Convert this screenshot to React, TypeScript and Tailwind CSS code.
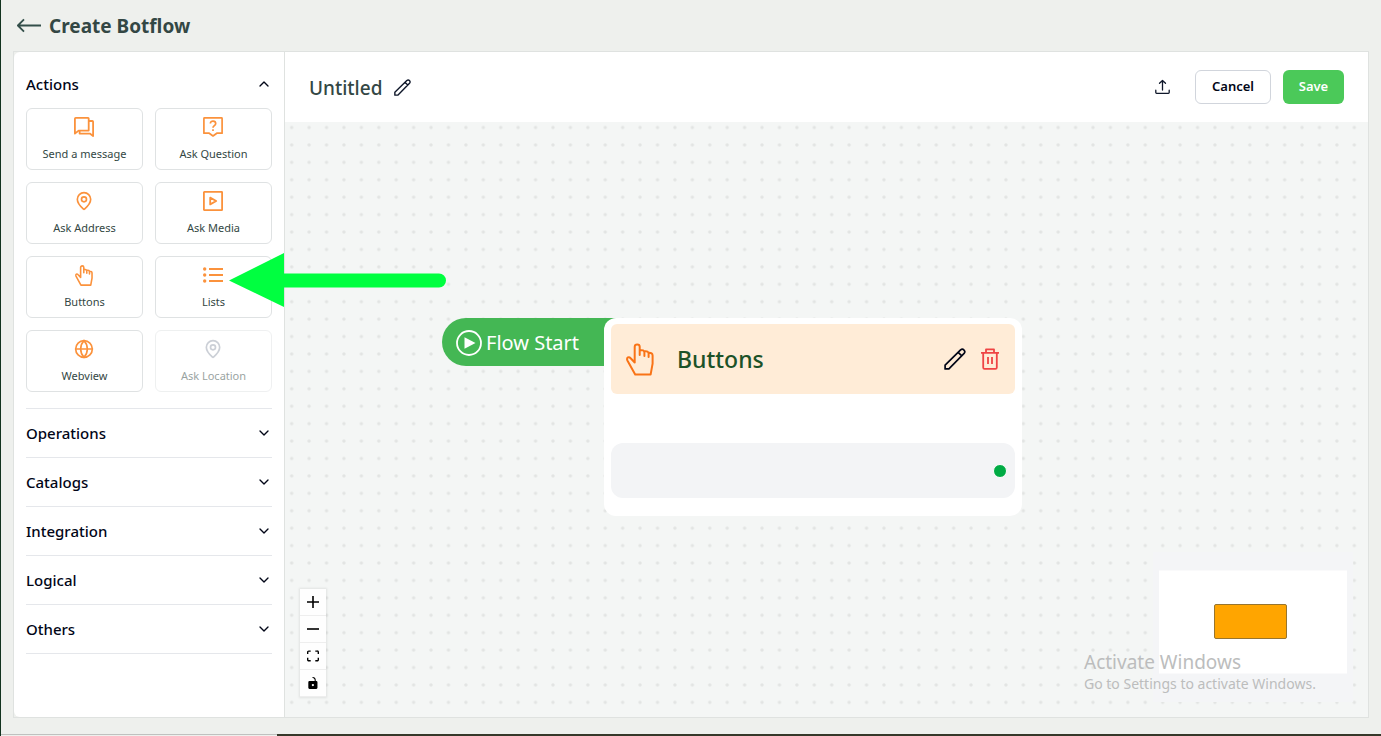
import type { ReactNode } from 'react';
import { ChevronDown, ChevronUp, Globe, MapPin } from 'lucide-react';

function MessageIcon() {
  return (
    <svg width="20" height="20" viewBox="0 0 20 20" fill="none" stroke="currentColor" strokeWidth="1.8" strokeLinejoin="round">
      <path d="M1.8.9h12.3q.6 0 .6.6v12.100H4.600L.9 16.600V1.800q0-.9.9-.9Z" />
      <path d="M14.700 4h3.700q.7 0 .7.700v14.300l-3.300-2.400H5.600v-3" />
    </svg>
  );
}

function QuestionIcon() {
  return (
    <svg width="20" height="20" viewBox="0 0 20 20" fill="none" stroke="currentColor" strokeWidth="1.7" strokeLinejoin="round">
      <path d="M1.500.9h17q.6 0 .6.6v14.700h-5.300L10 19l-3.800-2.800H.9V1.500q0-.6.6-.6Z" />
      <path d="M7.400 6.600c0-3.400 5.300-3.200 5.300 0 0 2.200-2.700 1.900-2.700 4.200" />
      <path d="M10 12.200v1.800" />
    </svg>
  );
}

function MediaIcon() {
  return (
    <svg width="20" height="20" viewBox="0 0 20 20" fill="none" stroke="currentColor" strokeWidth="1.8" strokeLinejoin="round">
      <rect x=".9" y=".9" width="18.200" height="18.200" rx=".4" />
      <path d="M7.200 6.600v6.800l6-3.400Z" />
    </svg>
  );
}

function HandIcon({ width, height, strokeWidth }: { width: number; height: number; strokeWidth: number }) {
  return (
    <svg width={width} height={height} viewBox="0 0 28 33" fill="none" stroke="currentColor" strokeWidth={strokeWidth} strokeLinejoin="round" strokeLinecap="round">
      <path d="M8.700 19.500V3.800C8.700.6 13.700.6 13.700 3.800V12M13.700 7.400q4.500-1 4.700 2V13M18.400 8.400q4.200-.6 4.200 2.200V14M22.600 9.800q4-.2 4 2.800v8L24.600 31.600H9.200L1.400 17.400c-1.200-3 1.600-4 3-2.400l4.300 4.500" />
    </svg>
  );
}

function PencilIcon({ size, strokeWidth }: { size: number; strokeWidth: number }) {
  return (
    <svg width={size} height={size} viewBox="0 0 22 22" fill="none" stroke="currentColor" strokeWidth={strokeWidth} strokeLinejoin="round">
      <path d="M1.100 17.200 16.600 1.900c2.400-2 5.500 1.200 3.500 3.500L4.900 20.900H1.100ZM14.200 4.300l3.600 3.500" />
    </svg>
  );
}

function ListIcon() {
  return (
    <svg width="20" height="20" viewBox="0 0 20 20" fill="none" stroke="currentColor" strokeWidth="1.8">
      <path d="M6 4h14M6 10h14M6 16h14" />
      <g fill="currentColor" stroke="none">
        <circle cx="1.700" cy="4" r="1.700" />
        <circle cx="1.700" cy="10" r="1.700" />
        <circle cx="1.700" cy="16" r="1.700" />
      </g>
    </svg>
  );
}

function TrashIcon() {
  return (
    <svg width="20" height="22" viewBox="0 0 20 22" fill="none" stroke="currentColor" strokeWidth="1.8" strokeLinejoin="round">
      <path d="M1 4.800h18M6 4.800V1.400h8v3.400M3.200 4.800v14.600q0 1.400 1.400 1.400h10.800q1.400 0 1.400-1.400V4.800M8 9v7M12 9v7" />
    </svg>
  );
}

type Action = { label: string; icon: ReactNode; disabled?: boolean };

const actions: Action[] = [
  { label: 'Send a message', icon: <MessageIcon /> },
  { label: 'Ask Question', icon: <QuestionIcon /> },
  { label: 'Ask Address', icon: <MapPin size={20} /> },
  { label: 'Ask Media', icon: <MediaIcon /> },
  { label: 'Buttons', icon: <HandIcon width={20} height={21} strokeWidth={2.5} /> },
  { label: 'Lists', icon: <ListIcon /> },
  { label: 'Webview', icon: <Globe size={20} /> },
  { label: 'Ask Location', icon: <MapPin size={20} />, disabled: true },
];

const sections = ['Operations', 'Catalogs', 'Integration', 'Logical', 'Others'];

function Sidebar() {
  return (
    <aside className="w-[271px] shrink-0 rounded-l-md border-r border-[#dfe2e0] bg-white px-3 pt-2">
      <section className="border-b border-gray-200 pb-4">
        <button type="button" className="flex w-full items-center justify-between py-3 text-[15px] leading-6 font-medium text-[#020617]">
          Actions
          <ChevronUp size={16} />
        </button>
        <div className="grid grid-cols-2 gap-3">
          {actions.map((action) => (
            <button
              key={action.label}
              type="button"
              disabled={action.disabled}
              className="flex flex-col items-center gap-[9px] rounded-md border border-[#dfe2e3] pt-2 pb-[7px] text-[11px] leading-4 text-[#334744] disabled:opacity-50"
            >
              <span className={action.disabled ? 'flex h-5 w-[21px] items-center text-gray-400' : 'flex h-5 w-[21px] items-center text-[#fb923c]'}>
                {action.icon}
              </span>
              {action.label}
            </button>
          ))}
        </div>
      </section>
      {sections.map((name) => (
        <button
          key={name}
          type="button"
          className="flex w-full items-center justify-between border-b border-gray-200 py-3 text-[15px] leading-6 font-medium text-[#020617]"
        >
          {name}
          <ChevronDown size={16} />
        </button>
      ))}
    </aside>
  );
}

function Toolbar() {
  return (
    <div className="flex items-center justify-between bg-white px-6 py-[18px]">
      <div className="flex items-center gap-3">
        <h2 className="pt-0.5 text-[19px] leading-7 font-medium text-[#334744]">Untitled</h2>
        <button type="button" aria-label="Rename" className="text-[#0f172a]">
          <PencilIcon size={17} strokeWidth={1.8} />
        </button>
      </div>
      <div className="flex items-center gap-3">
        <button type="button" aria-label="Export" className="mr-3 text-[#0f172a]">
          <svg width="16" height="16" viewBox="0 0 16 16" fill="none" stroke="currentColor" strokeWidth="1.300" strokeLinecap="round" strokeLinejoin="round">
            <path d="M7.500 11V1.600M4.500 4.300l3-2.800 3 2.800M.8 11.200v2.400q0 .8.8.8h11.800q.8 0 .8-.8v-2.400" />
          </svg>
        </button>
        <button type="button" className="h-[34px] w-[76px] rounded-md border border-gray-300 text-[13px] font-semibold text-[#020617]">
          Cancel
        </button>
        <button type="button" className="h-[34px] w-[61px] rounded-md bg-[#4bc959] text-[13px] font-semibold text-white">
          Save
        </button>
      </div>
    </div>
  );
}

function FlowNode() {
  return (
    <div className="absolute top-[196px] left-[157px] flex items-start">
      <div className="flex h-12 w-[174px] items-center gap-1 rounded-l-full bg-[#44b754] pt-0.5 pl-3.5 text-[20px] text-white">
        <svg width="26" height="26" viewBox="0 0 26 26" className="shrink-0">
          <circle cx="13" cy="13" r="12" fill="none" stroke="currentColor" strokeWidth="1.8" />
          <path d="M8.500 7.200v11.600L19.500 13Z" fill="currentColor" />
        </svg>
        Flow Start
      </div>
      <div className="-ml-3 w-[418px] rounded-xl bg-white px-[7px] pt-1.5 pb-[18px]">
        <div className="flex h-[70px] items-center rounded-md bg-[#ffecd7] px-[15px]">
          <span className="text-[#f97316]">
            <HandIcon width={28} height={33} strokeWidth={2} />
          </span>
          <h3 className="ml-[23px] flex-1 text-[23px] font-medium text-[#1c5228]">Buttons</h3>
          <button type="button" aria-label="Edit" className="text-[#020617]">
            <PencilIcon size={22} strokeWidth={1.7} />
          </button>
          <button type="button" aria-label="Delete" className="ml-3.5 text-[#ef4444]">
            <TrashIcon />
          </button>
        </div>
        <div className="mt-[49px] flex h-[55px] items-center justify-end rounded-xl bg-gray-100 pr-2">
          <span className="size-3.5 rounded-full border border-white bg-[#00ab44]" />
        </div>
      </div>
    </div>
  );
}

function Controls() {
  const button = 'flex h-[27px] w-[26px] items-center justify-center border-b border-[#eeeeee] bg-[#fefefe]';
  return (
    <div className="absolute bottom-5 left-[15px] shadow-[0_0_2px_1px_rgba(0,0,0,0.08)]">
      <button type="button" aria-label="Zoom in" className={button}>
        <svg width="12" height="12" viewBox="0 0 32 32">
          <path d="M32 18.133H18.133V32h-4.266V18.133H0v-4.266h13.867V0h4.266v13.867H32z" />
        </svg>
      </button>
      <button type="button" aria-label="Zoom out" className={button}>
        <svg width="12" height="2" viewBox="0 0 12 2">
          <path d="M0 .2h12v1.600H0z" />
        </svg>
      </button>
      <button type="button" aria-label="Fit view" className={button}>
        <svg width="12" height="12" viewBox="0 0 32 30">
          <path d="M3.692 4.630c0-.530.400-.938.939-.938h5.215V0H4.708C2.130 0 0 2.054 0 4.630v5.216h3.692V4.631zM27.354 0h-5.200v3.692h5.170c.530 0 .984.400.984.939v5.215H32V4.631A4.624 4.624 0 0027.354 0zm.954 24.830c0 .532-.400.940-.939.940h-5.215v3.768h5.215c2.577 0 4.631-2.130 4.631-4.707v-5.139h-3.692v5.139zm-23.677.940c-.531 0-.939-.400-.939-.940v-5.138H0v5.139c0 2.577 2.130 4.707 4.708 4.707h5.138V25.770H4.631z" />
        </svg>
      </button>
      <button type="button" aria-label="Toggle interactivity" className={button}>
        <svg width="12" height="12" viewBox="0 0 25 32">
          <path d="M21.333 10.667H19.810V7.619C19.810 3.429 16.380 0 12.190 0c-4.114 1.828-1.370 2.133.305 2.438 1.676.305 4.420 2.590 4.420 5.181v3.048H3.047A3.056 3.056 0 000 13.714v15.238A3.056 3.056 0 003.048 32h18.285a3.056 3.056 0 003.048-3.048V13.714a3.056 3.056 0 00-3.048-3.047zM12.190 24.533a3.056 3.056 0 01-3.047-3.047 3.056 3.056 0 013.047-3.048 3.056 3.056 0 013.048 3.048 3.056 3.056 0 01-3.048 3.047z" />
        </svg>
      </button>
    </div>
  );
}

function Canvas() {
  return (
    <div className="relative flex-1 overflow-hidden bg-[#f4f6f5]">
      <svg className="absolute inset-0 size-full" aria-hidden="true">
        <defs>
          <pattern id="dots" x="-2" y="-3.200" width="17.420" height="17.420" patternUnits="userSpaceOnUse">
            <circle cx="8.700" cy="8.700" r="1.700" fill="#e2e4e3" />
          </pattern>
        </defs>
        <rect width="100%" height="100%" fill="url(#dots)" />
      </svg>
      <FlowNode />
      <Controls />
      <div className="absolute right-[15px] bottom-[15px] h-[150px] w-[200px] bg-[#f4f5f7]">
        <svg width="200" height="150" viewBox="0 0 200 150" role="img" aria-label="Mini map">
          <rect x="6" y="18.500" width="188" height="103" fill="#fff" />
          <rect x="61.500" y="52.500" width="72" height="34" rx="1.500" fill="orange" stroke="#97752f" />
        </svg>
      </div>
    </div>
  );
}

export default function App() {
  return (
    <div className="relative flex min-h-screen flex-col border-l border-[#12331f] bg-[#eef0ed] font-['Noto_Sans','Open_Sans',sans-serif]">
      <header className="flex h-[51px] items-center gap-2 pl-4">
        <a href="#back" aria-label="Back" className="text-[#334f4a]">
          <svg width="24" height="16" viewBox="0 0 24 16" fill="none" stroke="currentColor" strokeWidth="1.8" strokeLinejoin="round">
            <path d="M24 7.500H1M7 1.300.900 7.500 7 13.700" />
          </svg>
        </a>
        <h1 className="text-[19px] leading-7 font-bold text-[#334744]">Create Botflow</h1>
      </header>

      <main className="relative mx-3 mb-4 flex flex-1 border border-[#dfe2e0]">
        <Sidebar />
        <div className="flex min-w-0 flex-1 flex-col">
          <Toolbar />
          <Canvas />
        </div>
        <svg width="217" height="54" viewBox="0 0 217 54" className="pointer-events-none absolute top-[201px] left-[215px]" aria-hidden="true">
          <path d="M0 27.500 55 0v20.500h155a7 7 0 0 1 0 14H55V54Z" fill="#00ff40" />
        </svg>
      </main>

      <div className="absolute right-[60px] bottom-[42px] w-[237px] whitespace-nowrap text-[#bcbdbd]">
        <p className="text-[19px] leading-6">Activate Windows</p>
        <p className="text-[14px] leading-5">Go to Settings to activate Windows.</p>
      </div>

      <footer className="flex h-0.5">
        <div className="w-[276px] border-t border-[#bfc1bf]" />
        <div className="flex-1 bg-[#36382a]" />
      </footer>
    </div>
  );
}
